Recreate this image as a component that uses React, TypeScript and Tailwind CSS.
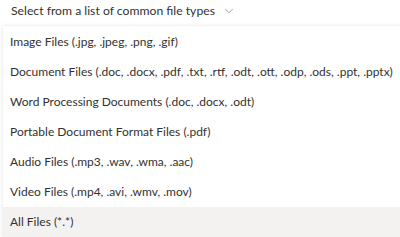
import { ChevronDown } from "lucide-react";

const options = [
    "Image Files (.jpg, .jpeg, .png, .gif)",
    "Document Files (.doc, .docx, .pdf, .txt, .rtf, .odt, .ott, .odp, .ods, .ppt, .pptx)",
    "Word Processing Documents (.doc, .docx, .odt)",
    "Portable Document Format Files (.pdf)",
    "Audio Files (.mp3, .wav, .wma, .aac)",
    "Video Files (.mp4, .avi, .wmv, .mov)",
    "All Files (*.*)",
];

export default function App() {
    const selected = 6;
    return (
        <div className="w-[400px] h-[237px] overflow-hidden bg-white text-[#323130] font-['Lato','Open_Sans',sans-serif]">
            <div className="h-[22px] flex items-center pl-[11px] gap-[7px] text-[12.2px]">
                <span>Select from a list of common file types</span>
                <ChevronDown size={14} strokeWidth={1} className="text-[#605e5c]" />
            </div>
            <div className="mt-[4px] ml-[3px] bg-white shadow-[0_0_4px_rgba(0,0,0,0.12)]">
                <div className="h-[1px]" />
                {options.map((o, i) => (
                    <div
                        key={o}
                        className={`h-[30px] flex items-center pl-[7px] text-[12px] whitespace-nowrap ${i === selected ? "bg-[#f3f2f1]" : ""}`}
                    >
                        {o}
                    </div>
                ))}
            </div>
        </div>
    );
}
